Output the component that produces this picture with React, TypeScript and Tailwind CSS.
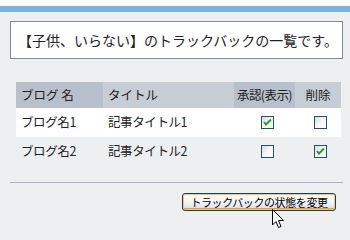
import React from "react";

const rows = [
  { blog: "ブログ名1", title: "記事タイトル1", approve: true, del: false },
  { blog: "ブログ名2", title: "記事タイトル2", approve: false, del: true },
];

const Check: React.FC<{ checked: boolean }> = ({ checked }) => (
  <div className="relative w-[13px] h-[13px] border border-[#1c5180] bg-gradient-to-br from-[#dcdcd6] via-[#f6f6f4] to-white">
    {checked && (
      <svg className="absolute left-[1px] top-[1px]" width="9" height="9" viewBox="0 0 9 9">
        <path d="M1 4 L3 6.5 L8 1.5" fill="none" stroke="#21a121" strokeWidth="2" />
      </svg>
    )}
  </div>
);

export default function App() {
  return (
    <div
      className="relative w-[350px] h-[240px] bg-[#eeeff1] overflow-hidden text-[#222]"
      style={{ fontFamily: '"Noto Sans CJK JP", "Noto Sans", sans-serif' }}
    >
      <div className="h-[6px] bg-white" />
      <div className="h-[6px] bg-[#78b5de]" />

      <div className="px-[10px] pr-[7px]">
        <div className="mt-[9px] h-[38px] border border-[#7b8a99] bg-white flex items-center pl-[7px] text-[14px] whitespace-nowrap">
          【子供、いらない】のトラックバックの一覧です。
        </div>

        <table className="mt-[23px] ml-[6px] w-[325px] border-collapse text-[12.5px]">
          <thead>
            <tr className="h-[26px] text-left font-normal">
              <th className="w-[87px] bg-[#b8c0cb] pl-[5px] font-normal">ブログ 名</th>
              <th className="w-[131px] bg-[#c6cdd5] pl-[5px] font-normal">タイトル</th>
              <th className="w-[61px] bg-[#b8c0cb] font-normal text-center tracking-[-0.6px] whitespace-nowrap">承認(表示)</th>
              <th className="w-[46px] bg-[#c6cdd5] font-normal text-center">削除</th>
            </tr>
          </thead>
          <tbody>
            {rows.map((r, i) => (
              <tr key={i} className={`h-[29px] ${i === 0 ? "bg-white" : ""}`}>
                <td className="pl-[5px] tracking-[-0.4px]">{r.blog}</td>
                <td className="pl-[5px] tracking-[-0.4px]">{r.title}</td>
                <td>
                  <div className="flex justify-center pl-[6px]">
                    <Check checked={r.approve} />
                  </div>
                </td>
                <td>
                  <div className="flex justify-center pl-[4px]">
                    <Check checked={r.del} />
                  </div>
                </td>
              </tr>
            ))}
          </tbody>
        </table>

        <div className="mt-[16px] h-px bg-[#aab6c3]" />

        <div className="flex justify-end mt-[10px] pr-[7px]">
          <button className="w-[154px] h-[18px] rounded-[3px] border border-[#1b3d6e] bg-gradient-to-b from-white via-[#f4f4f8] to-[#d8d8e4] shadow-[inset_0_0_0_1px_#f8c860,inset_0_-2px_0_0_#e5a228] text-[11px] tracking-[-0.4px] leading-none whitespace-nowrap text-black flex items-center justify-center">
            トラックバックの状態を変更
          </button>
        </div>
      </div>

      <svg className="absolute left-[272px] top-[209px]" width="14" height="22" viewBox="0 0 14 22">
        <path
          d="M0.5 0.5 L0.5 16 L4 12.5 L6.5 18.5 L9 17.5 L6.5 11.5 L11.5 11.5 Z"
          fill="white"
          stroke="black"
          strokeWidth="1"
          strokeLinejoin="miter"
        />
      </svg>
    </div>
  );
}
